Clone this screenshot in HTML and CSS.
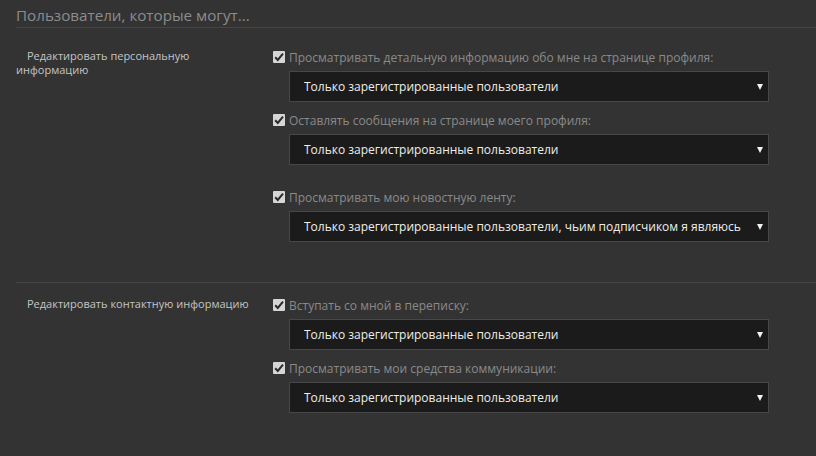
FILE: index.html
```html
<!DOCTYPE html>
<html lang="ru">
<head>
    <meta charset="UTF-8">
    <meta name="viewport" content="width=device-width, initial-scale=1.0">
    <title>Приватность</title>
    <link rel="stylesheet" href="styles.css">
</head>
<body>

<div class="privacy">
    <h2 class="privacy-title">Пользователи, которые могут...</h2>

    <!-- Personal info -->
    <div class="group">
        <div class="group-label">Редактировать персональную информацию</div>
        <div class="group-options">
            <div class="option">
                <label class="check"><span class="box"><svg viewBox="0 0 12 12"><path d="M2.2 6.2 L4.8 9 L10 2.6" /></svg></span>Просматривать детальную информацию обо мне на странице профиля:</label>
                <div class="select">
                    <select>
                        <option>Только зарегистрированные пользователи</option>
                    </select>
                </div>
            </div>
            <div class="option">
                <label class="check"><span class="box"><svg viewBox="0 0 12 12"><path d="M2.2 6.2 L4.8 9 L10 2.6" /></svg></span>Оставлять сообщения на странице моего профиля:</label>
                <div class="select">
                    <select>
                        <option>Только зарегистрированные пользователи</option>
                    </select>
                </div>
            </div>
            <div class="option option-spaced">
                <label class="check"><span class="box"><svg viewBox="0 0 12 12"><path d="M2.2 6.2 L4.8 9 L10 2.6" /></svg></span>Просматривать мою новостную ленту:</label>
                <div class="select">
                    <select>
                        <option>Только зарегистрированные пользователи, чьим подписчиком я являюсь</option>
                    </select>
                </div>
            </div>
        </div>
    </div>

    <!-- Contact info -->
    <div class="group">
        <div class="group-label">Редактировать контактную информацию</div>
        <div class="group-options">
            <div class="option">
                <label class="check"><span class="box"><svg viewBox="0 0 12 12"><path d="M2.2 6.2 L4.8 9 L10 2.6" /></svg></span>Вступать со мной в переписку:</label>
                <div class="select">
                    <select>
                        <option>Только зарегистрированные пользователи</option>
                    </select>
                </div>
            </div>
            <div class="option">
                <label class="check"><span class="box"><svg viewBox="0 0 12 12"><path d="M2.2 6.2 L4.8 9 L10 2.6" /></svg></span>Просматривать мои средства коммуникации:</label>
                <div class="select">
                    <select>
                        <option>Только зарегистрированные пользователи</option>
                    </select>
                </div>
            </div>
        </div>
    </div>
</div>

</body>
</html>
```

FILE: styles.css
```css
body {
    font-family: "Open Sans", Arial, sans-serif;
    background-color: #333333;
    margin: 0;
    color: #bbbbbb;
}
.privacy {
    padding: 4px 0 0 16px;
}
.privacy-title {
    font-size: 15.2px;
    font-weight: normal;
    color: #8c8c8c;
    margin: 0 0 7px;
    line-height: 22px;
    padding-bottom: 1px;
    border-bottom: 1px solid #454545;
}
.group {
    display: grid;
    grid-template-columns: 273px 480px;
    padding: 14px 0 40px;
    border-bottom: 1px solid #454545;
}
.group:last-child {
    border-bottom: none;
}
.group-label {
    font-size: 11px;
    line-height: 14px;
    text-indent: 11px;
    color: #c4c4c4;
    padding-top: 0;
    padding-right: 30px;
}
.group-options {
    display: flex;
    flex-direction: column;
    gap: 10px;
}
.option-spaced {
    margin-top: 14px;
}
.check {
    display: flex;
    align-items: center;
    gap: 4px;
    font-size: 12px;
    line-height: 18px;
    color: #8a8a8a;
    margin-left: -16px;
    margin-bottom: 4px;
}
.box {
    width: 12px;
    height: 12px;
    background: #d6d6d6;
    border-radius: 1px;
    flex: none;
    display: flex;
    margin-top: -3px;
}
.box svg {
    width: 12px;
    height: 12px;
    fill: none;
    stroke: #2a2a2a;
    stroke-width: 2;
}
.select {
    position: relative;
}
.select select {
    appearance: none;
    width: 100%;
    height: 31px;
    background: #1b1b1b;
    border: 1px solid #474747;
    color: #eeeeea;
    font-family: inherit;
    font-size: 12px;
    padding: 0 14px;
    outline: none;
    display: block;
}
.select::after {
    content: "";
    position: absolute;
    right: 6px;
    top: 13px;
    border-left: 3.5px solid transparent;
    border-right: 3.5px solid transparent;
    border-top: 6px solid #f2f2f2;
}
```
